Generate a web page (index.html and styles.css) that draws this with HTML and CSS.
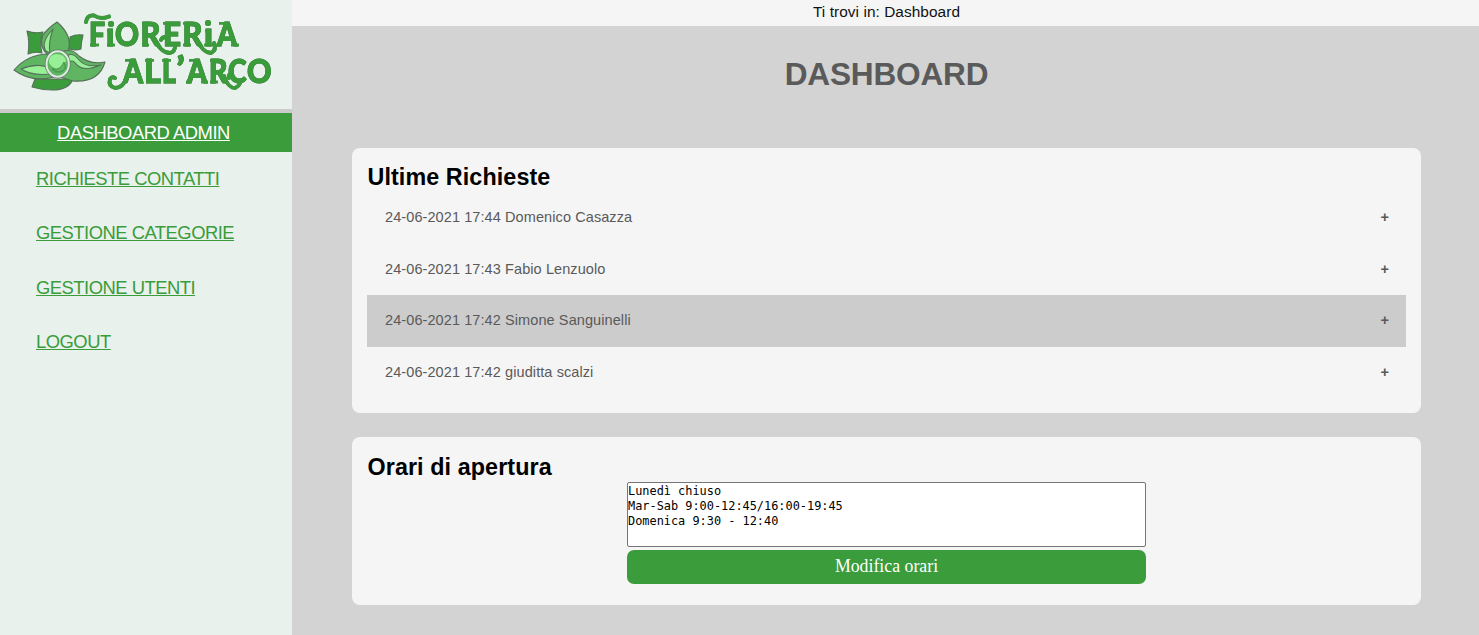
FILE: index.html
```html
<!DOCTYPE html>
<html lang="it">
<head>
<meta charset="utf-8">
<title>Dashboard</title>
<link rel="stylesheet" href="styles.css">
</head>
<body>
<div class="layout">
  <aside class="sidebar">
    <svg class="logo" viewBox="0 0 292 109" width="292" height="109" role="img" aria-label="Fioreria all'Arco">
      <g stroke="#56705a" stroke-width="1.1" stroke-linejoin="round">
        <path fill="#3a9c3a" d="M27 31 Q35 34 43 32 Q39 42 42 53 Q35 51 28 54 Q30 42 27 31Z"/>
        <path fill="#3a9c3a" d="M70 37 Q76 34 83 35 Q81 43 81 49 Q75 51 69 49Z"/>
        <path fill="#3a9c3a" d="M35 79 H73 Q69 90 52 90 Q42 90 32 87Z"/>
        <path fill="#5fb562" d="M57 22 Q71 34 69 47 Q68 53 64 56 L48 55 Q38 46 43 35 Q47 29 57 22Z"/>
        <path fill="#98f096" d="M53 29 Q40 43 46 51 L50 53 Q48 43 53 29Z"/>
        <path fill="#5fb562" d="M14 70 Q28 54 49 54 L54 77 Q31 83 14 70Z"/>
        <path fill="#98f096" d="M21 69 Q35 63 48 67 L50 74 Q32 76 21 69Z"/>
        <path fill="#5fb562" d="M64 51 Q73 49 79 56 Q90 65 105 62 Q99 83 73 81 L60 77Z"/>
        <path fill="#98f096" d="M68 55 Q74 53 79 60 Q86 68 101 65 Q84 72 77 65 Q73 59 69 62Z"/>
      </g>
      <ellipse cx="57.7" cy="64" rx="11.2" ry="12.7" fill="#5fb562" stroke="#59745d" stroke-width="3.4"/>
      <ellipse cx="57.7" cy="64" rx="11.2" ry="12.7" fill="#5fb562" stroke="#e2e9e5" stroke-width="2"/>
      <path fill="#98f096" d="M49 63 Q48 55 56 54 Q64 54 66 60 Q65 67 58 69 Q52 68 49 63Z"/>
      <path fill="#5fb562" stroke="#397b3e" stroke-width=".7" d="M52 69 Q60 71 64 62 Q68 70 60 72 Q55 73 52 69Z"/>
      <g class="wordmark">
        <g class="logo-text">
          <text x="89" y="46" textLength="16" lengthAdjust="spacingAndGlyphs">F</text>
          <text x="106" y="46" textLength="8.5" lengthAdjust="spacingAndGlyphs">ı</text>
          <text x="115" y="46" textLength="24" lengthAdjust="spacingAndGlyphs">O</text>
          <text x="140.5" y="46" textLength="20" lengthAdjust="spacingAndGlyphs">R</text>
          <text x="163" y="46" textLength="18" lengthAdjust="spacingAndGlyphs">E</text>
          <text x="182.5" y="46" textLength="20" lengthAdjust="spacingAndGlyphs">R</text>
          <text x="204" y="46" textLength="9" lengthAdjust="spacingAndGlyphs">ı</text>
          <text x="217" y="46" textLength="20" lengthAdjust="spacingAndGlyphs">A</text>
          <text x="123" y="83" textLength="20" lengthAdjust="spacingAndGlyphs">A</text>
          <text x="144" y="83" textLength="17" lengthAdjust="spacingAndGlyphs">L</text>
          <text x="162" y="83" textLength="14" lengthAdjust="spacingAndGlyphs">L</text>
          <text x="176.5" y="80" textLength="8" lengthAdjust="spacingAndGlyphs">’</text>
          <text x="187" y="83" textLength="20" lengthAdjust="spacingAndGlyphs">A</text>
          <text x="209" y="83" textLength="18.5" lengthAdjust="spacingAndGlyphs">R</text>
          <text x="228" y="83" textLength="18.5" lengthAdjust="spacingAndGlyphs">C</text>
          <text x="247" y="83" textLength="24.5" lengthAdjust="spacingAndGlyphs">O</text>
        </g>
        <g fill="none" stroke="#3a9c3a" stroke-width="3.8" stroke-linecap="round" stroke-linejoin="round">
          <path d="M86 22 Q87 15 94 15.5 Q101 20 109 16.5"/>
          <path d="M155 40 Q161 53 170 53 Q175 52 175 46"/>
          <path d="M197 40 Q203 53 211 53 Q217 50 214 43"/>
          <path d="M127 77 Q123 88 115 88 Q108 86 110 79 Q112 76 115 78"/>
          <path d="M224 76 Q228 88 235 88 Q239 86 240 83"/>
          <path d="M229 78 Q228 74 232 73"/>
          <path d="M161 40 Q162 37 166 37"/>
        </g>
        <g fill="none" stroke="#3a9c3a" stroke-width="2.6">
          <path d="M90 45 H99 M107 45 H115 M107 31 H110 M142 45 H149 M142 23.3 H146 M163 23.3 H167 M183 45 H191 M183 23.3 H187 M204 45 H213 M205 31 H208 M216 45 H222 M231 45 H239 M219 23.3 H228"/>
          <path d="M138 82 H143 M125 60.3 H134 M145 60.3 H154 M162 60.3 H171 M186 82 H192 M201 82 H208 M189 60.3 H198 M210 82 H218 M210 60.3 H215"/>
        </g>
        <g fill="#3a9c3a"><circle cx="111" cy="24" r="3"/><circle cx="208" cy="23" r="3"/></g>
      </g>
    </svg>
    <a class="current" href="#">DASHBOARD ADMIN</a>
    <nav class="menu">
      <a href="#">RICHIESTE CONTATTI</a>
      <a href="#">GESTIONE CATEGORIE</a>
      <a href="#">GESTIONE UTENTI</a>
      <a href="#">LOGOUT</a>
    </nav>
  </aside>
  <main class="main">
    <div class="breadcrumb">Ti trovi in: Dashboard</div>
    <h1 class="title">DASHBOARD</h1>
    <section class="card requests">
      <h2 class="heading">Ultime Richieste</h2>
      <div class="request"><span>24-06-2021 17:44 Domenico Casazza</span><b>+</b></div>
      <div class="request"><span>24-06-2021 17:43 Fabio Lenzuolo</span><b>+</b></div>
      <div class="request active"><span>24-06-2021 17:42 Simone Sanguinelli</span><b>+</b></div>
      <div class="request"><span>24-06-2021 17:42 giuditta scalzi</span><b>+</b></div>
    </section>
    <section class="card hours">
      <h2 class="heading">Orari di apertura</h2>
      <form class="form">
        <textarea class="times" spellcheck="false">Lunedì chiuso
Mar-Sab 9:00-12:45/16:00-19:45
Domenica 9:30 - 12:40</textarea>
        <button class="submit" type="button">Modifica orari</button>
      </form>
    </section>
  </main>
</div>
</body>
</html>
```

FILE: styles.css
```css
* { box-sizing: border-box; }
body { margin: 0; font-family: "Liberation Sans", Arial, sans-serif; background: #d3d3d3; }
.layout { display: flex; height: 635px; overflow: hidden; }
.sidebar { width: 292px; flex: none; background: #e8f1ec; display: flex; flex-direction: column; }
.logo { display: block; flex: none; }
.wordmark { filter: drop-shadow(0 0 .6px #4d6b50); }
.logo-text { font-family: Lato, sans-serif; font-weight: 900; font-size: 33px; fill: #3a9c3a; stroke: #3a9c3a; stroke-width: 1px; }
.current { height: 43px; flex: none; border-top: 4px solid #cbcbcb; background: #3a9c3a; color: #fff; font-size: 18.4px; line-height: 40px; text-align: center; padding-right: 5px; letter-spacing: -.47px; }
.menu { display: flex; flex-direction: column; align-items: flex-start; padding: 16px 0 0 36px; gap: 32.3px; }
.menu a { color: #3a9c3a; font-size: 18.4px; line-height: 22px; letter-spacing: -.5px; }
.main { flex: 1; display: flex; flex-direction: column; }
.breadcrumb { height: 26px; flex: none; background: #f5f5f5; color: #111; font-size: 15.4px; letter-spacing: .06px; padding-left: 2px; line-height: 24px; text-align: center; }
.title { margin: 29px 0 0; height: 93px; color: #5a5a5a; font-size: 31.6px; letter-spacing: -.2px; padding-left: 2px; line-height: 38px; text-align: center; }
.card { margin: 0 58px 24px 59.5px; padding: 14px 15px 0 15.5px; border-radius: 8px; background: #f5f5f5; flex: none; }
.requests { height: 265px; }
.hours { height: 167.5px; padding-top: 15px; }
.heading { margin: 0; color: #000; font-size: 23.3px; letter-spacing: .1px; line-height: 30px; padding-left: .5px; }
.request { height: 51.5px; padding: 0 17px 0 18px; display: flex; justify-content: space-between; color: #5a5a5a; font-size: 14.5px; letter-spacing: .09px; line-height: 51px; }
.active { background: #ccc; }
.form { width: 519px; margin: 0 auto; display: flex; flex-direction: column; gap: 3px; }
.times { display: block; height: 65px; margin: 0; padding: 1px 0; border: 1px solid #767676; border-radius: 2px; background: #fff; color: #000; font-family: "DejaVu Sans Mono", monospace; font-size: 11.9px; line-height: 15px; resize: none; overflow: hidden; }
.submit { height: 34px; padding: 0 0 2px; border: 0; border-radius: 7px; background: #3a9c3a; color: #fff; font-family: "Liberation Serif", "Times New Roman", serif; font-size: 17.8px; }
```
